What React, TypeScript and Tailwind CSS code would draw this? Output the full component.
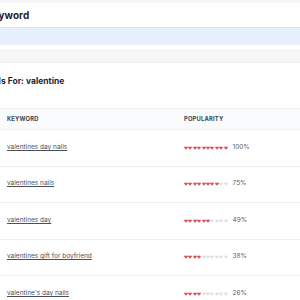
import React from 'react';

const rows = [
  { keyword: 'valentines day nails', filled: 10, pct: '100%' },
  { keyword: 'valentines nails', filled: 8, pct: '75%' },
  { keyword: 'valentines day', filled: 6, pct: '49%' },
  { keyword: 'valentines gift for boyfriend', filled: 4, pct: '38%' },
  { keyword: "valentine's day nails", filled: 4, pct: '26%' },
];

function Heart({ on }: { on: boolean }) {
  return (
    <svg width="4" height="4" viewBox="0 0 10 10" className={on ? 'text-[#d9545f]' : 'text-[#dde0e5]'}>
      <path d="M5 9.2 1 5.2C-.3 3.9.2 1.2 2.6 1c1.1-.1 1.9.5 2.4 1.3C5.5 1.5 6.3.9 7.4 1c2.4.2 2.9 2.9 1.6 4.2Z" fill="currentColor" />
    </svg>
  );
}

export default function App() {
  return (
    <div className="w-[300px] h-[300px] overflow-hidden bg-[#f6f6f7] font-['Inter','Liberation_Sans',sans-serif]">
      <div className="h-[3px]" />
      {/* search card */}
      <div className="bg-white h-[47px] flex flex-col">
        <div className="h-[24px] flex items-center">
          <h2 className="ml-[-14px] text-[10px] font-bold text-[#1f2430] leading-none">Keyword</h2>
        </div>
        <div className="h-[18px] bg-[#e8effc] border-t border-[#dde3ec]" />
      </div>
      <div className="h-[12px] border-t border-[#eeeff1]" />
      {/* results card */}
      <div className="bg-white border-t border-[#eeeff1]">
        <div className="h-[45px] flex items-center pb-[9px]">
          <h3 className="ml-[-23px] text-[8.5px] font-bold text-[#1f2430] leading-none">Details For: valentine</h3>
        </div>
        <div className="h-[21px] flex items-center bg-[#fafbfc] border-t border-[#f0f1f3] text-[5.8px] font-bold text-[#3b4150] tracking-[0.2px]">
          <div className="w-[184px] pl-[7px]">KEYWORD</div>
          <div>POPULARITY</div>
        </div>
        {rows.map((r, i) => (
          <div key={i} className="h-[36.5px] flex items-center border-t border-[#eef0f2] text-[6.5px] text-[#4a4f5c]">
            <div className="w-[184px] pl-[7px]">
              <span className="underline underline-offset-[1px]">{r.keyword}</span>
            </div>
            <div className="flex items-center gap-[0.4px]">
              {Array.from({ length: 10 }).map((_, j) => (
                <Heart key={j} on={j < r.filled} />
              ))}
            </div>
            <span className="ml-[5px] text-[6.5px] text-[#5b606b]">{r.pct}</span>
          </div>
        ))}
      </div>
    </div>
  );
}
